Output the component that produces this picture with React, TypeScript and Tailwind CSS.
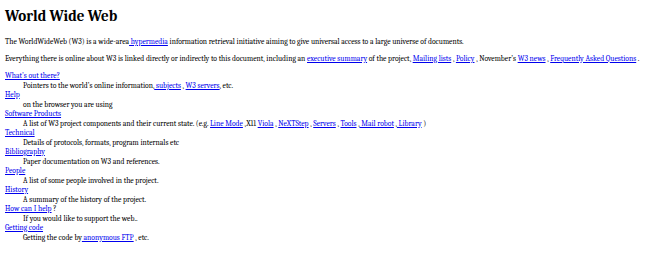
import React from 'react';

const A: React.FC<{ children: React.ReactNode }> = ({ children }) => (
  <a href="#" className="text-[#0000ee] underline">
    {children}
  </a>
);

const items: { t: React.ReactNode; d: React.ReactNode }[] = [
  {
    t: "What's out there?",
    d: (
      <>
        Pointers to the world's online information,<A> subjects</A> , <A>W3 servers</A>, etc.
      </>
    ),
  },
  { t: 'Help', d: <>on the browser you are using</> },
  {
    t: 'Software Products',
    d: (
      <>
        A list of W3 project components and their current state. (e.g. <A>Line Mode</A> ,X11 <A>Viola</A> ,{' '}
        <A>NeXTStep</A> , <A>Servers</A> , <A>Tools</A> ,<A> Mail robot</A> ,<A> Library</A> )
      </>
    ),
  },
  { t: 'Technical', d: <>Details of protocols, formats, program internals etc</> },
  { t: 'Bibliography', d: <>Paper documentation on W3 and references.</> },
  { t: 'People', d: <>A list of some people involved in the project.</> },
  { t: 'History', d: <>A summary of the history of the project.</> },
  { t: <><A>How can I help</A> ?</>, d: <>If you would like to support the web..</> },
  {
    t: 'Getting code',
    d: (
      <>
        Getting the code by<A> anonymous FTP</A> , etc.
      </>
    ),
  },
];

export default function App() {
  return (
    <div className="w-[650px] h-[257px] bg-white overflow-hidden px-[5px] pt-[7px] text-[7.6px] leading-[9.5px] text-black font-serif [font-family:'Liberation_Serif',serif]">
      {/* heading */}
      <h1 className="text-[15px] leading-[18px] font-bold">World Wide Web</h1>

      <p className="mt-[12px]">
        The WorldWideWeb (W3) is a wide-area<A> hypermedia</A> information retrieval initiative aiming to give
        universal access to a large universe of documents.
      </p>
      <p className="mt-[7px]">
        Everything there is online about W3 is linked directly or indirectly to this document, including an{' '}
        <A>executive summary</A> of the project, <A>Mailing lists</A> , <A>Policy</A> , November's <A>W3 news</A> ,{' '}
        <A>Frequently Asked Questions</A> .
      </p>

      <dl className="mt-[8px]">
        {items.map((it, i) => (
          <React.Fragment key={i}>
            <dt>{typeof it.t === 'string' ? <A>{it.t}</A> : it.t}</dt>
            <dd className="ml-[18px]">{it.d}</dd>
          </React.Fragment>
        ))}
      </dl>
    </div>
  );
}
